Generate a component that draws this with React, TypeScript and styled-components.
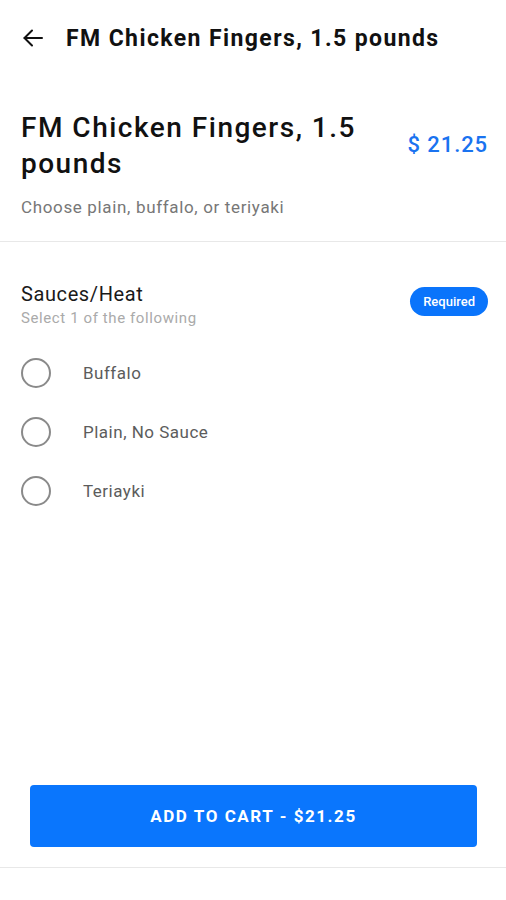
import React from "react";
import styled, { createGlobalStyle } from "styled-components";

const Global = createGlobalStyle`
  html, body { margin: 0; padding: 0; background: #fff; }
  body { font-family: Roboto, "Noto Sans", Arial, sans-serif; -webkit-font-smoothing: antialiased; }
  * { box-sizing: border-box; }
`;

const Page = styled.div`
  width: 506px;
  height: 900px;
  display: flex;
  flex-direction: column;
  background: #fff;
`;

const TopBar = styled.div`
  height: 76px;
  display: flex;
  align-items: center;
  padding: 0 0 0 20px;
  gap: 20px;
`;

const BackButton = styled.button`
  border: none;
  background: none;
  padding: 0;
  width: 26px;
  height: 26px;
  display: flex;
  align-items: center;
  justify-content: center;
  color: #111;
`;

const TopTitle = styled.h1`
  margin: 0;
  font-size: 23px;
  font-weight: 700;
  color: #111;
  letter-spacing: 1.4px;
  white-space: nowrap;
`;

const Hero = styled.div`
  padding: 34px 18px 0 21px;
  display: flex;
  align-items: center;
  justify-content: space-between;
  gap: 16px;
`;

const ItemName = styled.h2`
  margin: 0;
  font-size: 28px;
  line-height: 36px;
  font-weight: 500;
  color: #111;
  letter-spacing: 1.5px;
  width: 360px;
`;

const Price = styled.div`
  margin-bottom: 4px;
  font-size: 22px;
  font-weight: 500;
  color: #1a73f0;
  letter-spacing: 0.9px;
  white-space: nowrap;
`;

const Description = styled.p`
  margin: 15px 0 0 21px;
  font-size: 17px;
  line-height: 20px;
  color: #777;
  letter-spacing: 0.65px;
`;

const Divider = styled.hr<{ $top: number }>`
  margin: ${(p) => p.$top}px 0 0 0;
  border: none;
  height: 1px;
  background: #e8e8e8;
`;

const Section = styled.div`
  padding: 40px 18px 0 21px;
`;

const SectionHead = styled.div`
  display: flex;
  justify-content: space-between;
  align-items: flex-start;
`;

const SectionTitle = styled.div`
  font-size: 20px;
  color: #1a1a1a;
  line-height: 24px;
  letter-spacing: 0.6px;
`;

const SectionSub = styled.div`
  margin-top: 3px;
  font-size: 15px;
  color: #aaa;
  line-height: 18px;
  letter-spacing: 0.6px;
`;

const Pill = styled.span`
  margin-top: 5px;
  background: #0a74fb;
  color: #fff;
  font-size: 13px;
  font-weight: 500;
  height: 29px;
  padding: 0 13px;
  border-radius: 15px;
  display: flex;
  align-items: center;
`;

const Options = styled.div`
  margin-top: 31px;
  display: flex;
  flex-direction: column;
  gap: 29px;
`;

const Option = styled.label`
  display: flex;
  align-items: center;
  gap: 32px;
  height: 30px;
`;

const Radio = styled.span`
  width: 30px;
  height: 30px;
  border-radius: 50%;
  border: 2px solid #8a8a8a;
`;

const OptionLabel = styled.span`
  font-size: 17px;
  color: #5c5c5c;
  letter-spacing: 0.5px;
`;

const Spacer = styled.div`
  flex: 1;
`;

const Footer = styled.div`
  padding: 0 29px 0 30px;
`;

const CartButton = styled.button`
  width: 100%;
  height: 62px;
  border: none;
  border-radius: 4px;
  background: #0a76fd;
  color: #fff;
  font-family: Roboto, Arial, sans-serif;
  font-size: 17px;
  font-weight: 700;
  letter-spacing: 1.55px;
`;

const BottomArea = styled.div`
  height: 32px;
`;

const options = ["Buffalo", "Plain, No Sauce", "Teriayki"];

export default function App() {
  return (
    <Page>
      <Global />
      <TopBar>
        <BackButton aria-label="Back">
          <svg width="24" height="24" viewBox="0 0 24 24" fill="none" stroke="#111" strokeWidth="2" strokeLinecap="round" strokeLinejoin="round">
            <path d="M21 12H3.5" />
            <path d="M11 4.5L3.5 12l7.5 7.5" />
          </svg>
        </BackButton>
        <TopTitle>FM Chicken Fingers, 1.5 pounds</TopTitle>
      </TopBar>
      <Hero>
        <ItemName>FM Chicken Fingers, 1.5 pounds</ItemName>
        <Price>$ 21.25</Price>
      </Hero>
      <Description>Choose plain, buffalo, or teriyaki</Description>
      <Divider $top={24} />
      <Section>
        <SectionHead>
          <div>
            <SectionTitle>Sauces/Heat</SectionTitle>
            <SectionSub>Select 1 of the following</SectionSub>
          </div>
          <Pill>Required</Pill>
        </SectionHead>
        <Options>
          {options.map((o) => (
            <Option key={o}>
              <Radio />
              <OptionLabel>{o}</OptionLabel>
            </Option>
          ))}
        </Options>
      </Section>
      <Spacer />
      <Footer>
        <CartButton>ADD TO CART - $21.25</CartButton>
      </Footer>
      <Divider $top={20} />
      <BottomArea />
    </Page>
  );
}
